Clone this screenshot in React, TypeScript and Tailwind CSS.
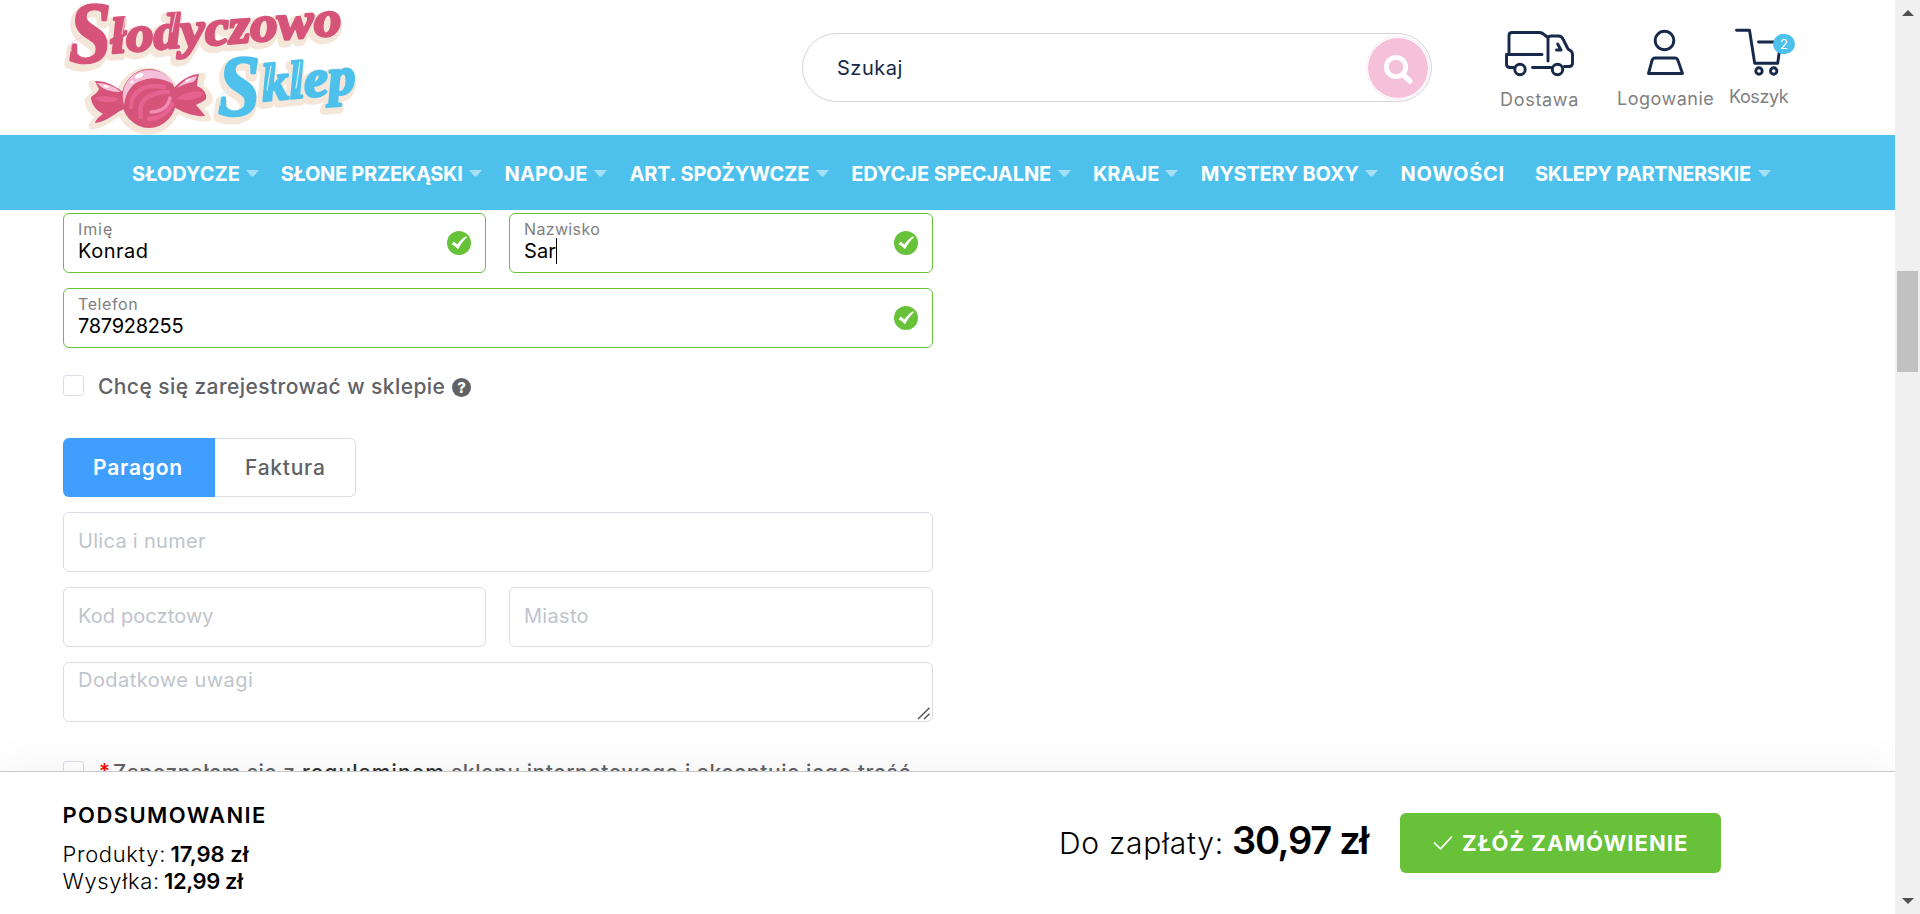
import React from "react";

const nav = [
  { t: "SŁODYCZE", w: "w-[106px] tracking-[0.05px]", arrow: true },
  { t: "SŁONE PRZEKĄSKI", w: "w-[181px] tracking-[-0.27px]", arrow: true },
  { t: "NAPOJE", w: "w-[82px] tracking-[0.1px]", arrow: true },
  { t: "ART. SPOŻYWCZE", w: "w-[179px] tracking-[-0.1px]", arrow: true },
  { t: "EDYCJE SPECJALNE", w: "w-[199px] tracking-[-0.05px]", arrow: true },
  { t: "KRAJE", w: "w-[65px]", arrow: true },
  { t: "MYSTERY BOXY", w: "w-[157px] tracking-[-0.24px]", arrow: true },
  { t: "NOWOŚCI", w: "w-[103.5px] tracking-[0.7px]", arrow: false },
  { t: "SKLEPY PARTNERSKIE", w: "w-[215px] tracking-[-0.34px]", arrow: true },
];

function LogoWords({ shadow = false }: { shadow?: boolean }) {
  const pink = shadow ? "#f4e7d9" : "#d65379";
  const blue = shadow ? "#f4e7d9" : "#4dc1ec";
  const sw = shadow ? 9 : 2.6;
  return (
    <g
      fontFamily="'Liberation Serif', serif"
      fontWeight="700"
      fontStyle="italic"
      strokeWidth={sw}
      strokeLinejoin="round"
      transform={shadow ? "translate(-2 3.5)" : undefined}
    >
      <g fill={pink} stroke={pink}>
        <text x="19" y="62" fontSize="87" textLength="42" lengthAdjust="spacingAndGlyphs">S</text>
        <text x="62" y="53" fontSize="50" textLength="231" lengthAdjust="spacingAndGlyphs" transform="rotate(-4.6 62 53)">łodyczowo</text>
      </g>
      <g fill={blue} stroke={blue}>
        <text x="168" y="115" fontSize="87" textLength="42" lengthAdjust="spacingAndGlyphs">S</text>
        <text x="213" y="101" fontSize="53" textLength="94" lengthAdjust="spacingAndGlyphs" transform="rotate(-5 213 101)">klep</text>
      </g>
    </g>
  );
}

function Logo() {
  const left = "M45 81C54 81 63 84 73 92L74 109C66 112 57 122 45 123C46 119 50 116 53 114C45 110 41 103 41 97C44 95 48 92 49 89Z";
  const right = "M123 89C132 79 140 75 149 74C148 78 147 83 147 86C154 89 157 94 156 99C153 102 149 103 146 105C149 109 153 112 155 116C144 117 132 112 124 107Z";
  return (
    <svg className="overflow-visible" width="320" height="135" viewBox="0 0 320 135" role="img" aria-label="Słodyczowo Sklep">
      <LogoWords shadow />
      <g fill="#f4e7d9" stroke="#f4e7d9" strokeWidth="7" strokeLinejoin="round">
        <path d={left} transform="translate(-3 3)" />
        <path d={right} transform="translate(3 2)" />
        <ellipse cx="98" cy="101" rx="29" ry="30" />
      </g>
      <path d={left} fill="#d65379" />
      <path d={right} fill="#d65379" />
      <path d="M47 83C56 83 64 86 71 92C62 92 55 90 51 87Z" fill="#f4bfd8" />
      <path d="M127 88C133 81 140 77 147 76C146 79 145 81 143 82C137 83 132 85 127 88Z" fill="#f4bfd8" />
      <path d="M44 98C52 95 62 96 70 99C63 103 52 104 44 98Z" fill="#e66291" />
      <path d="M126 99C134 93 146 89 154 93C152 98 139 102 126 99Z" fill="#e66291" />
      <ellipse cx="99" cy="98.5" rx="27.5" ry="29.5" fill="#d65379" />
      <path d="M74 105C69 85 82 70 99 70C112 70 120 77 123 84C114 79 105 77 97 79C82 82 76 91 74 105Z" fill="#f4bfd8" />
      <g fill="none" stroke="#e66291" strokeWidth="4.5" strokeLinecap="round">
        <path d="M81 107C81 91 96 83 114 87" />
        <path d="M91 117C87 101 99 92 118 92" />
        <path d="M99 119C108 119 119 113 122 104" />
      </g>
      <path d="M101 112C111 112 118 107 120 98" fill="none" stroke="#f08bb2" strokeWidth="3.5" strokeLinecap="round" />
      <ellipse cx="89" cy="76" rx="4.5" ry="2" fill="#fff" transform="rotate(-28 89 76)" />
      <circle cx="82" cy="82" r="1.6" fill="#fff" />
      <ellipse cx="56" cy="86.5" rx="3" ry="1.1" fill="#fff" transform="rotate(12 56 86.5)" />
      <ellipse cx="138" cy="80" rx="3" ry="1.1" fill="#fff" transform="rotate(-25 138 80)" />
      <LogoWords />
      <g fill="none" stroke="#f7c9dc" strokeWidth="1.2" strokeLinecap="round">
        <path d="M21 51C20 43 24 39 32 38" />
        <path d="M75 18L72 34M126 13L122 32" />
      </g>
      <g fill="none" stroke="#d9f2fc" strokeWidth="1.2" strokeLinecap="round">
        <path d="M170 105C169 95 174 91 182 90" />
        <path d="M221 66L217 90M250 62L246 88" />
      </g>
    </svg>
  );
}

function ValidMark() {
  return (
    <svg className="mt-[17px] mr-[14px] shrink-0" width="24" height="24" viewBox="0 0 24 24">
      <circle cx="12" cy="12" r="12" fill="#67c23a" />
      <path d="M4.6 13.2L6.8 10.6L10.2 13.4C12.8 9.8 15.5 7 19.3 5.2L20 6.2C16.5 9.4 13.7 13.2 11 18.2C9.2 16.2 7 14.4 4.6 13.2Z" fill="#fff" />
    </svg>
  );
}

function Filled({ label, labelCls, value, valueCls, width, caret = false }: {
  label: string; labelCls: string; value: string; valueCls: string; width: string; caret?: boolean;
}) {
  return (
    <div className={`flex h-[60px] justify-between rounded-[6px] border border-[#67c23a] bg-white pl-[14px] ${width}`}>
      <div className="pt-[5px]">
        <div className={`text-[16px] leading-[20px] text-[#808080] ${labelCls}`}>{label}</div>
        <div className="flex">
          <span className={`text-[20px] leading-[24px] text-black ${valueCls}`}>{value}</span>
          {caret && <span className="-mt-px h-[26px] w-px bg-black" />}
        </div>
      </div>
      <ValidMark />
    </div>
  );
}

function Empty({ text, cls }: { text: string; cls: string }) {
  return (
    <div className={`flex h-[60px] items-center rounded-[6px] border border-[#dcdce6] pb-[2px] pl-[14px] text-[20px] leading-[24px] text-[#c0c4cc] ${cls}`}>
      {text}
    </div>
  );
}

export default function App() {
  return (
    <div className="flex h-[914px] w-[1920px] overflow-hidden bg-white font-['Inter',sans-serif]">
      <div className="flex w-[1895px] flex-col overflow-hidden">
        <header className="relative z-10 shrink-0 bg-white">
          <div className="flex h-[135px] pl-[50px]">
            <Logo />
            <div className="mt-[33px] ml-[432px] flex h-[69px] w-[630px] items-center justify-between rounded-[34.5px] border border-[#d4d4d4] pr-[1px] pl-[34px]">
              <span className="text-[20px] leading-[24px] tracking-[0.5px] text-[#16294a]">Szukaj</span>
              <div className="flex size-[64px] items-center justify-center rounded-full border border-[#fbeaf2]">
                <div className="size-[60px] rounded-full bg-[#f4c1d9]">
                  <svg width="60" height="60" viewBox="0 0 60 60" fill="none" stroke="#fff" strokeLinecap="round">
                    <circle cx="28" cy="29" r="9.7" strokeWidth="4.8" />
                    <path d="M35.5 37L42 43.2" strokeWidth="5.2" />
                  </svg>
                </div>
              </div>
            </div>
            <div className="ml-[68px] flex text-[18px] leading-[24px] text-[#808080]">
              <div className="w-[117px] pt-[25px]">
                <svg width="80" height="63" viewBox="0 0 80 63" fill="none" stroke="#16294a" strokeWidth="2.9" strokeLinecap="round" strokeLinejoin="round">
                  <path d="M9 29.5V10.5Q9 7.5 12 7.5H39.5Q42 7.5 44 9.5L48 12.5V36" />
                  <path d="M42 29.5H6.5V39Q6.5 42.5 10 42.5H13.5" />
                  <path d="M48 12.5Q49 11 51 11H58.5C61.5 11 62.5 12.5 63.5 15L67.5 23Q68 24.5 69.5 25Q72.5 26.5 72.5 29.5V38Q72.5 41.5 69 41.5H64.5" />
                  <path d="M32.5 42.5H51M57.7 19L61 25H56.5" />
                  <circle cx="20" cy="44.5" r="5.2" />
                  <circle cx="57.5" cy="44.5" r="5.2" />
                </svg>
                <div className="tracking-[0.7px]">Dostawa</div>
              </div>
              <div className="w-[112px] pt-[25px]">
                <svg className="ml-[23px]" width="52" height="62" viewBox="0 0 52 62" fill="none" stroke="#16294a" strokeWidth="2.9" strokeLinecap="round" strokeLinejoin="round">
                  <circle cx="24.5" cy="15.5" r="9.3" />
                  <path d="M8.5 48.5L12 35.5Q12.8 33 15 33H35Q37.2 33 38 35.5L42.5 48.5Z" />
                </svg>
                <div className="tracking-[0.5px]">Logowanie</div>
              </div>
              <div className="relative w-[66px] pt-[25px]">
                <svg className="ml-px" width="60" height="60" viewBox="0 0 60 60" fill="none" stroke="#16294a" strokeWidth="2.9" strokeLinecap="round" strokeLinejoin="round">
                  <path d="M6.5 5.3H19.5L24.7 38.3H47.7L50 22M28.5 17H50" />
                  <circle cx="29" cy="46" r="3.2" />
                  <circle cx="43.7" cy="46" r="3.2" />
                </svg>
                <span className="absolute top-[34px] left-[44px] flex h-[20px] w-[22px] items-center justify-center rounded-full bg-[#4dc1ec] text-[13px] text-white">2</span>
                <div className="tracking-[-0.4px]">Koszyk</div>
              </div>
            </div>
          </div>
          <nav className="flex h-[75px] items-center bg-[#4dc1ec] pt-[2px] pl-[132px] text-[20px] leading-[24px] font-bold whitespace-nowrap text-white">
            {nav.map((n) => (
              <div key={n.t} className={n.arrow ? "mr-[22.3px] flex items-center" : "mr-[31px] flex items-center"}>
                <span className={n.w}>{n.t}</span>
                {n.arrow && (
                  <svg className="ml-[7.5px]" width="13" height="7" viewBox="0 0 13 7">
                    <path d="M0 0H13L7.5 6.5H5.5Z" fill="#a6e0f6" />
                  </svg>
                )}
              </div>
            ))}
          </nav>
        </header>

        <main className="h-[561px] shrink-0 overflow-hidden pt-[3px] pl-[63px] whitespace-nowrap">
          <div className="w-[870px]">
            <div className="flex justify-between">
              <Filled width="w-[423px]" label="Imię" labelCls="tracking-[0.9px]" value="Konrad" valueCls="tracking-[0.5px]" />
              <Filled width="w-[424px]" label="Nazwisko" labelCls="tracking-[0.35px]" value="Sar" valueCls="tracking-[0.1px]" caret />
            </div>
            <div className="mt-[15px]">
              <Filled width="w-full" label="Telefon" labelCls="tracking-[0.6px]" value="787928255" valueCls="tracking-[-0.3px]" />
            </div>
            <div className="mt-[27px] flex h-[21px] items-center">
              <span className="size-[21px] rounded-[3px] border border-[#dcdfe6]" />
              <span className="mt-[2px] ml-[14px] w-[348px] text-[21px] leading-[24px] font-medium tracking-[0.42px] text-[#606266]">Chcę się zarejestrować w sklepie</span>
              <span className="mt-[3px] ml-[6px] flex size-[19px] items-center justify-center rounded-full bg-[#606266] text-[15px] leading-none font-extrabold text-white">?</span>
            </div>
            <div className="mt-[42px] flex h-[59px] text-[21px] font-medium">
              <div className="flex w-[152px] items-center rounded-l-[6px] bg-[#409eff] pl-[30px] font-semibold tracking-[0.8px] text-white">Paragon</div>
              <div className="flex w-[141px] items-center rounded-r-[6px] border border-l-0 border-[#dcdfe6] pl-[30px] tracking-[0.75px] text-[#606266]">Faktura</div>
            </div>
            <div className="mt-[15px]">
              <Empty text="Ulica i numer" cls="w-full tracking-[0.3px]" />
            </div>
            <div className="mt-[15px] flex justify-between">
              <Empty text="Kod pocztowy" cls="w-[423px] tracking-[0.1px]" />
              <Empty text="Miasto" cls="w-[424px] tracking-[0.3px]" />
            </div>
            <div className="mt-[15px] flex h-[60px] items-end justify-between rounded-[6px] border border-[#dcdce6] pr-[2px] pb-[1px] pl-[14px]">
              <span className="self-start pt-[5px] text-[20px] leading-[24px] tracking-[0.45px] text-[#c0c4cc]">Dodatkowe uwagi</span>
              <svg width="13" height="13" viewBox="0 0 13 13" stroke="#505050" strokeWidth="1.4">
                <path d="M1 12L12.5 0.8M7 12L12.5 6.8" />
              </svg>
            </div>
            <div className="mt-[39px] flex items-start text-[21px] leading-[24px] font-medium text-[#606266]">
              <span className="size-[21px] rounded-[3px] border border-[#dcdfe6]" />
              <span className="-mt-px ml-[15px] w-[14px] text-[#ff0000]">*</span>
              <span className="w-[189px] tracking-[0.45px]">Zapoznałem się z</span>
              <span className="w-[149px] tracking-[1.15px] text-[#303133]">regulaminem</span>
              <span className="tracking-[0.55px]">sklepu internetowego i akceptuję jego treść.</span>
            </div>
          </div>
        </main>

        <footer className="relative z-10 flex h-[143px] shrink-0 justify-between border-t border-[#c8c8c8] bg-white pr-[174px] pl-[63px] whitespace-nowrap text-black shadow-[0_0_50px_rgba(0,0,0,0.06)]">
          <div className="-ml-[0.5px] pt-[30px] text-[22px] leading-[27px]">
            <div className="mb-[12px] font-semibold tracking-[1.4px]">PODSUMOWANIE</div>
            <div className="flex">
              <span className="w-[108px] font-light tracking-[0.65px]">Produkty:</span>
              <span className="font-semibold">17,98 zł</span>
            </div>
            <div className="flex">
              <span className="w-[101.5px] font-light tracking-[0.65px]">Wysyłka:</span>
              <span className="font-semibold tracking-[-0.4px]">12,99 zł</span>
            </div>
          </div>
          <div className="flex items-start">
            <div className="flex items-baseline pt-[45px] leading-[46px]">
              <span className="w-[173px] text-[30px] font-light tracking-[0.74px]">Do zapłaty:</span>
              <span className="w-[168px] text-[38px] font-semibold tracking-[-1.3px]">30,97 zł</span>
            </div>
            <div className="mt-[41px] flex h-[60px] w-[321px] items-center rounded-[6px] bg-[#67c23a] pl-[33px] text-[22px] leading-[24px] font-bold tracking-[1.05px] text-white">
              <svg className="mr-[9px]" width="20" height="14" viewBox="0 0 20 14" fill="none" stroke="#fff" strokeWidth="1.7" strokeLinecap="round" strokeLinejoin="round">
                <path d="M1.5 7L7.5 12.8L18.5 1" />
              </svg>
              ZŁÓŻ ZAMÓWIENIE
            </div>
          </div>
        </footer>
      </div>

      <aside className="flex w-[25px] flex-col items-center bg-[#f0f0f0]">
        <svg className="mt-[10px]" width="12" height="6" viewBox="0 0 12 6"><path d="M0 6L6 0L12 6Z" fill="#505050" /></svg>
        <div className="mt-[255px] h-[101px] w-[21px] bg-[#c1c1c1]" />
        <svg className="mt-auto mb-[10px]" width="12" height="6" viewBox="0 0 12 6"><path d="M0 0L6 6L12 0Z" fill="#505050" /></svg>
      </aside>
    </div>
  );
}
